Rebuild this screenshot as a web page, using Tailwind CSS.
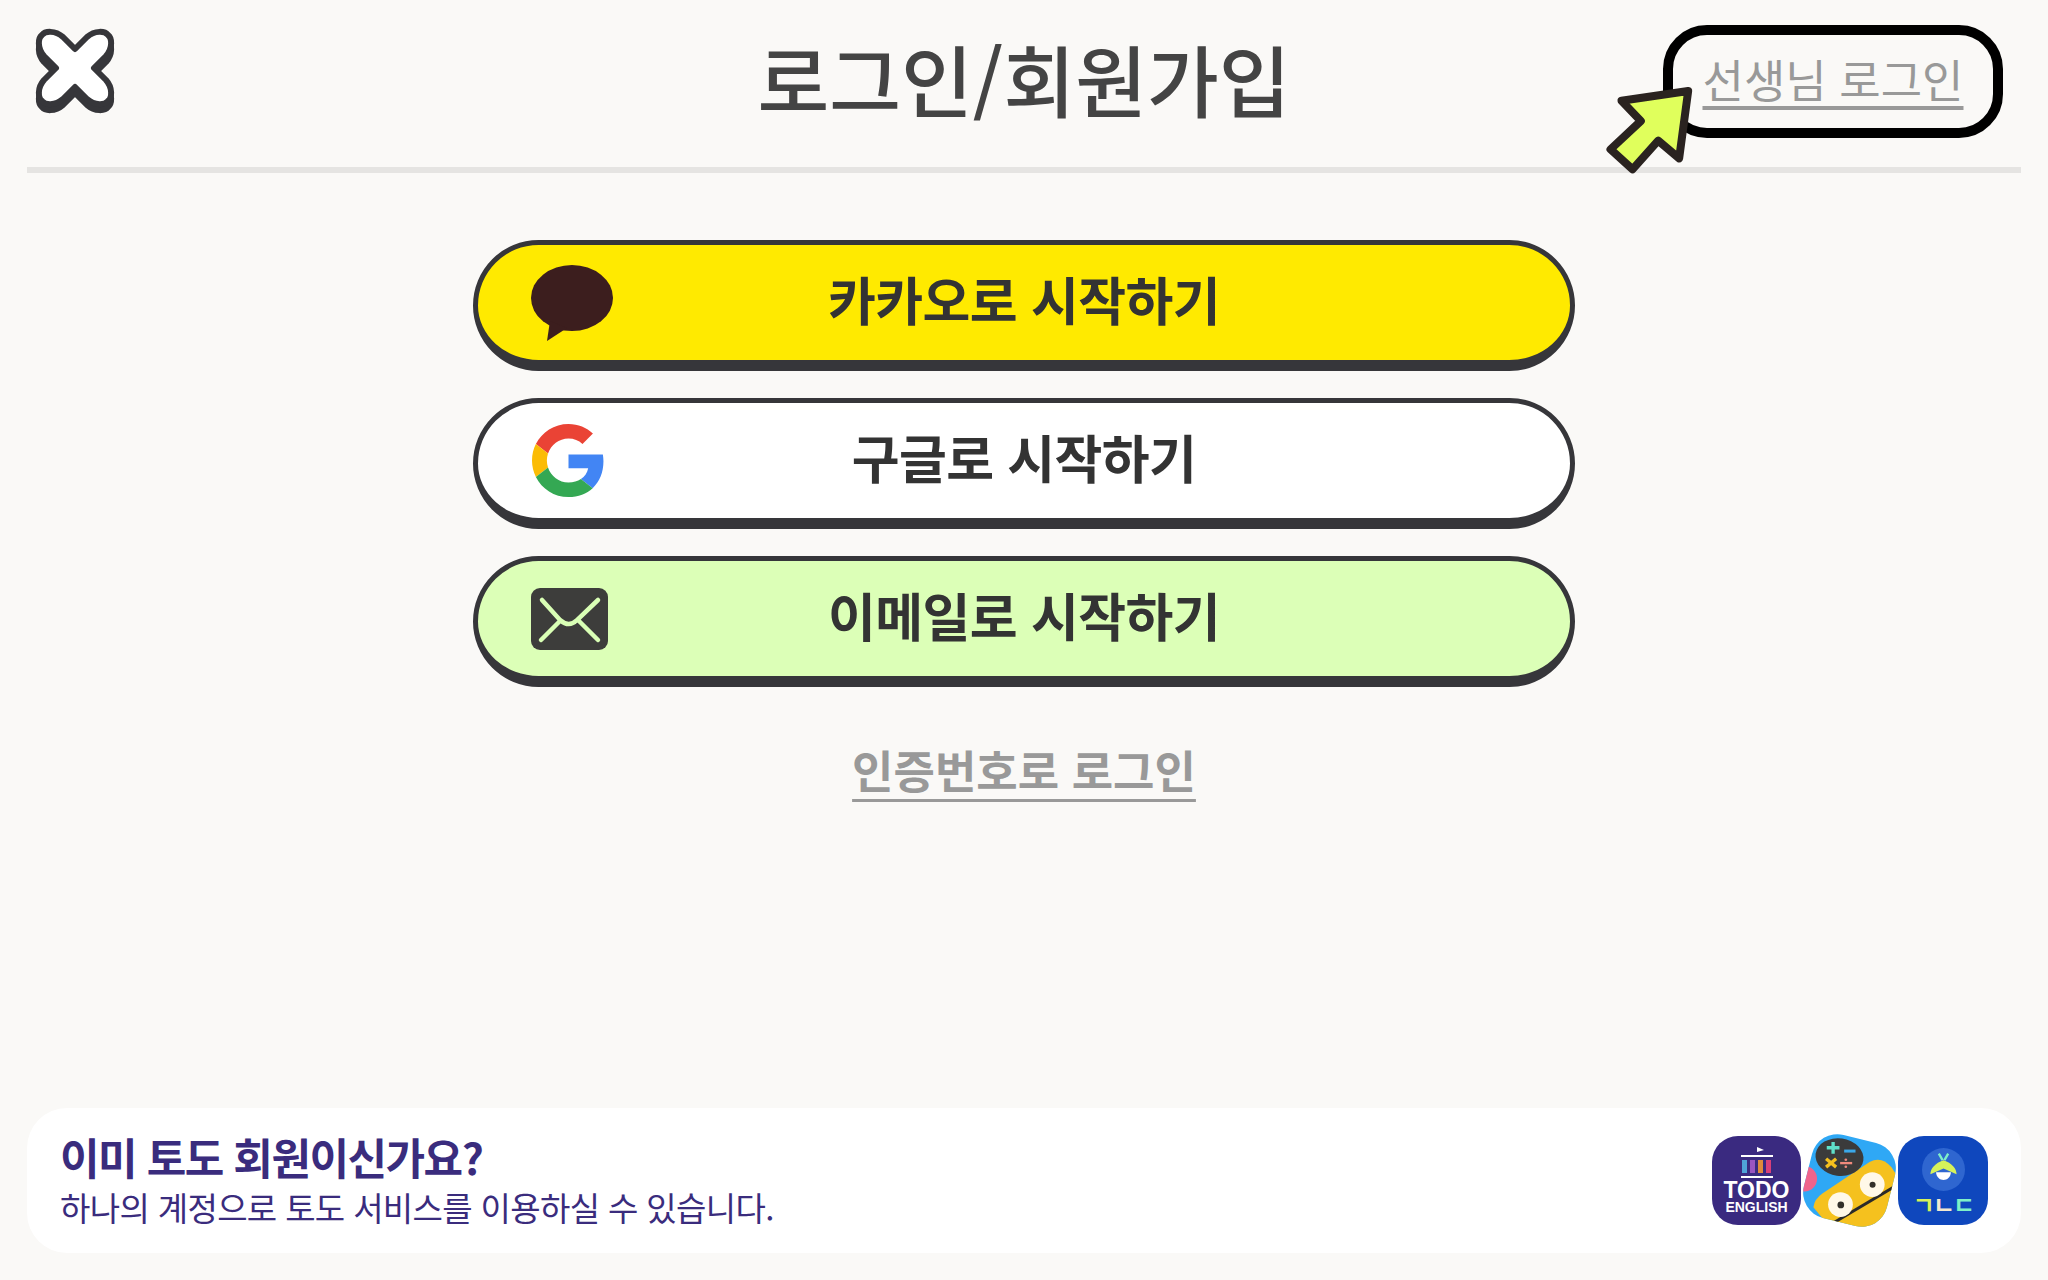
<!DOCTYPE html>
<html lang="ko">
<head>
    <meta charset="UTF-8">
    <title>로그인/회원가입</title>
    <script src="https://cdn.jsdelivr.net/npm/@tailwindcss/browser@4"></script>
</head>
<body class="bg-[#faf9f7] font-['Noto_Sans_CJK_KR','Noto_Sans',sans-serif]">
    <div class="flex flex-col w-[2048px] h-[1280px] overflow-hidden">
        <!-- Header -->
        <header class="grid grid-cols-[1fr_auto_1fr] items-center h-[167px] pb-[4px] px-[45px]">
            <button class="justify-self-start ml-[-15px] mb-[22px]" aria-label="닫기">
                <svg width="90" height="96" viewBox="-45 -45 90 96">
                    <path transform="translate(0 6)" fill="#36363a" stroke="#36363a" stroke-width="6" stroke-linejoin="round" d="M0 -19L12 -31C20 -38 30 -37 33 -33C37 -30 38 -20 31 -12L19 0L31 12C38 20 37 30 33 33C30 37 20 38 12 31L0 19L-12 31C-20 38 -30 37 -33 33C-37 30 -38 20 -31 12L-19 0L-31 -12C-38 -20 -37 -30 -33 -33C-30 -37 -20 -38 -12 -31Z"/>
                    <path fill="#fff" stroke="#36363a" stroke-width="6" stroke-linejoin="round" d="M0 -19L12 -31C20 -38 30 -37 33 -33C37 -30 38 -20 31 -12L19 0L31 12C38 20 37 30 33 33C30 37 20 38 12 31L0 19L-12 31C-20 38 -30 37 -33 33C-37 30 -38 20 -31 12L-19 0L-31 -12C-38 -20 -37 -30 -33 -33C-30 -37 -20 -38 -12 -31Z"/>
                </svg>
            </button>
            <h1 class="mb-[8px] text-[78px] leading-none font-medium text-[#444444]">로그인/회원가입</h1>
            <div class="relative justify-self-end">
                <a href="#" class="flex items-center justify-center w-[340px] h-[113px] pb-[7px] border-[10px] border-black rounded-[44px] text-[45px] leading-none text-[#999999] underline underline-offset-[8px] decoration-[4px]">선생님 로그인</a>
                <svg class="absolute left-[-60px] top-[60px]" width="92" height="90" viewBox="70 225 275 270">
                    <polygon points="325,243 125,272 183,333 92,418 158,478 235,392 298,445" fill="#e0ff5c" stroke="#2a2320" stroke-width="24" stroke-linejoin="round"/>
                </svg>
            </div>
        </header>
        <div class="mx-[27px] h-[6px] bg-[#e5e4e2]"></div>

        <!-- Login buttons -->
        <main class="flex flex-col items-center gap-[27px] mt-[67px]">
            <a href="#" class="grid grid-cols-[1fr_auto_1fr] items-center w-[1102px] h-[131px] pl-[53px] bg-[#ffea00] border-[5px] border-b-[11px] border-[#36363a] rounded-[66px] text-[52px] leading-none tracking-[-0.6px] font-bold text-[#333333]">
                <svg width="82" height="76" viewBox="0 0 82 76">
                    <ellipse cx="41" cy="33" rx="41" ry="33" fill="#3c1e1e"/>
                    <polygon points="19,56 16,76 36,63" fill="#3c1e1e"/>
                </svg>
                <span class="mr-[53px] mb-[7px]">카카오로 시작하기</span>
            </a>
            <a href="#" class="grid grid-cols-[1fr_auto_1fr] items-center w-[1102px] h-[131px] pl-[54px] bg-white border-[5px] border-b-[11px] border-[#36363a] rounded-[66px] text-[52px] leading-none tracking-[-0.6px] font-bold text-[#333333]">
                <svg width="73" height="73" viewBox="0 0 48 48">
                    <path fill="#EA4335" d="M24 9.5c3.54 0 6.71 1.22 9.21 3.6l6.85-6.85C35.9 2.38 30.47 0 24 0 14.62 0 6.51 5.38 2.56 13.22l7.98 6.19C12.43 13.72 17.74 9.5 24 9.5z"/>
                    <path fill="#4285F4" d="M46.98 24.55c0-1.57-.15-3.09-.38-4.55H24v9.02h12.94c-.58 2.96-2.26 5.48-4.78 7.18l7.73 6c4.51-4.18 7.09-10.36 7.09-17.65z"/>
                    <path fill="#FBBC05" d="M10.53 28.59c-.48-1.45-.76-2.99-.76-4.59s.27-3.14.76-4.59l-7.98-6.19C.92 16.46 0 20.12 0 24c0 3.88.92 7.54 2.56 10.78l7.97-6.19z"/>
                    <path fill="#34A853" d="M24 48c6.48 0 11.93-2.13 15.89-5.81l-7.73-6c-2.15 1.45-4.92 2.3-8.16 2.3-6.26 0-11.57-4.22-13.47-9.91l-7.98 6.19C6.51 42.62 14.62 48 24 48z"/>
                </svg>
                <span class="mr-[54px] mb-[7px]">구글로 시작하기</span>
            </a>
            <a href="#" class="grid grid-cols-[1fr_auto_1fr] items-center w-[1102px] h-[131px] pl-[53px] bg-[#dcffb7] border-[5px] border-b-[11px] border-[#36363a] rounded-[66px] text-[52px] leading-none tracking-[-0.6px] font-bold text-[#333333]">
                <svg width="77" height="62" viewBox="0 0 77 62">
                    <rect width="77" height="62" rx="9" fill="#3d3d3b"/>
                    <path d="M11 12L29 32Q38 40 46 32L67 12M29 33L10 52M48 33L67 52" fill="none" stroke="#d9ffb5" stroke-width="4.5" stroke-linecap="round"/>
                </svg>
                <span class="mr-[53px] mb-[7px]">이메일로 시작하기</span>
            </a>
            <a href="#" class="mt-[22px] text-[45px] leading-[68px] font-semibold text-[#999999] underline underline-offset-[10px] decoration-[3px]">인증번호로 로그인</a>
        </main>

        <!-- Bottom banner -->
        <section class="flex items-center justify-between mt-auto mb-[27px] mx-[27px] h-[145px] px-[33px] bg-white rounded-[40px]">
            <div class="flex flex-col text-[#3a2c7d]">
                <p class="text-[43px] leading-[50px] tracking-[-1.5px] font-bold mb-[2px]">이미 토도 회원이신가요?</p>
                <p class="text-[33px] leading-[48px] tracking-[-0.65px]">하나의 계정으로 토도 서비스를 이용하실 수 있습니다.</p>
            </div>
            <div class="flex items-center">
                <!-- Todo English -->
                <div class="flex flex-col items-center justify-end w-[89px] h-[89px] pb-[11px] rounded-[26px] bg-[#3a2a80] font-['Liberation_Sans',sans-serif] font-bold text-white">
                    <svg width="34" height="32" viewBox="0 0 34 32">
                        <path d="M17 9V1L24 4L17 6" fill="#fff"/>
                        <path d="M1 10H33M1 31H33" stroke="#fff" stroke-width="2"/>
                        <rect x="2" y="14" width="5" height="13" fill="#4fa3d8"/>
                        <rect x="10" y="14" width="5" height="13" fill="#9a55c0"/>
                        <rect x="18" y="14" width="5" height="13" fill="#e08a3c"/>
                        <rect x="26" y="14" width="5" height="13" fill="#d8407a"/>
                    </svg>
                    <span class="mt-[2px] text-[23px] leading-[20px]">TODO</span>
                    <span class="text-[14px] leading-[14px]">ENGLISH</span>
                </div>
                <!-- Math game -->
                <svg width="97" height="97" viewBox="335 65 290 290">
                    <defs>
                        <clipPath id="blob"><rect x="352" y="82" width="256" height="256" rx="78" transform="rotate(14 480 210)"/></clipPath>
                    </defs>
                    <g clip-path="url(#blob)">
                        <rect x="335" y="65" width="290" height="290" fill="#2fa8f5"/>
                        <circle cx="345" cy="205" r="38" fill="#f0648c"/>
                        <path d="M372 290Q375 265 400 248L540 155Q575 135 605 170L625 200V360H430Z" fill="#f5c11e"/>
                        <path d="M435 335L620 225" stroke="#2a2a2a" stroke-width="9"/>
                    </g>
                    <ellipse cx="450" cy="140" rx="72" ry="56" fill="#3b3b3b" transform="rotate(8 450 140)"/>
                    <path d="M412 112H450M431 95V130" stroke="#5fe0c8" stroke-width="10"/>
                    <path d="M464 122H498" stroke="#3aa8e8" stroke-width="9"/>
                    <path d="M410 145L440 170M440 145L410 170" stroke="#f5c11e" stroke-width="10"/>
                    <path d="M452 158H488" stroke="#f08a7c" stroke-width="7"/>
                    <circle cx="469" cy="148" r="4" fill="#f08a7c"/>
                    <circle cx="469" cy="169" r="4" fill="#f08a7c"/>
                    <circle cx="453" cy="282" r="37" fill="#fff8e8"/>
                    <circle cx="454" cy="283" r="10" fill="#33302a"/>
                    <circle cx="548" cy="222" r="37" fill="#fff8e8"/>
                    <circle cx="549" cy="223" r="9" fill="#33302a"/>
                </svg>
                <!-- Blue app -->
                <div class="flex flex-col items-center justify-end w-[90px] h-[89px] pb-[12px] rounded-[26px] bg-[#0f47bd]">
                    <svg width="43" height="43" viewBox="0 0 46 46">
                        <circle cx="23" cy="23" r="23" fill="#2f66d0"/>
                        <path d="M18 6L22 13M28 6L24 13" stroke="#7ff0c8" stroke-width="2.5"/>
                        <path d="M23 13C14 16 9 22 9 28L23 22L37 28C37 22 32 16 23 13Z" fill="#d7f25a"/>
                        <path d="M15 26H31C30 37 16 37 15 26Z" fill="#fff"/>
                    </svg>
                    <span class="flex mt-[4px] text-[24px] leading-[18px] tracking-[-2px] font-bold"><span class="text-[#d7f25a]">ㄱ</span><span class="text-[#f3e8d0]">ㄴ</span><span class="text-[#7ff0c8]">ㄷ</span></span>
                </div>
            </div>
        </section>
    </div>
</body>
</html>
